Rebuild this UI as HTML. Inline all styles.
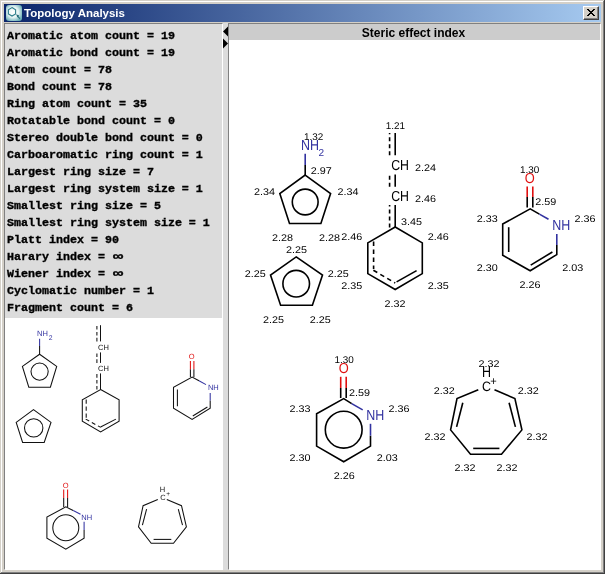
<!DOCTYPE html>
<html><head><meta charset="utf-8">
<style>
html,body{margin:0;padding:0;}
body{width:605px;height:574px;position:relative;overflow:hidden;background:#d4d0c8;font-family:"Liberation Sans",sans-serif;}
.a{position:absolute;}
#title{left:4px;top:4px;width:597px;height:18px;background:linear-gradient(to right,#0a246a,#a6caf0);}
#ttext{left:24px;top:6px;color:#fff;font-weight:bold;font-size:11.5px;line-height:14px;white-space:nowrap;}
#close{left:583px;top:6px;width:16px;height:14px;box-sizing:border-box;background:#d4d0c8;border-top:1px solid #fff;border-left:1px solid #fff;border-right:1px solid #404040;border-bottom:1px solid #404040;}
#close:after{content:"";position:absolute;left:0;top:0;right:0;bottom:0;border-right:1px solid #808080;border-bottom:1px solid #808080;}
#lp{left:4px;top:23px;width:219px;height:547px;box-sizing:border-box;border-top:1px solid #808080;border-left:1px solid #808080;border-right:1px solid #fff;border-bottom:1px solid #fff;background:#fff;}
#txt{left:5px;top:24px;width:217px;height:294px;background:#dcdcdc;}
#lines{left:6.5px;top:28px;font-family:"Liberation Mono",monospace;font-weight:bold;font-size:11.67px;line-height:17px;white-space:pre;color:#000;-webkit-text-stroke:0.35px #000;}
.inf{display:inline-block;transform:scaleX(1.45);transform-origin:0 0;margin-left:1.5px;}
#split{left:223px;top:23px;width:5px;height:547px;background:#dcdcdc;}
#rp{left:228px;top:23px;width:373px;height:547px;box-sizing:border-box;border-top:1px solid #808080;border-left:1px solid #808080;border-right:1px solid #fff;border-bottom:1px solid #fff;background:#fff;}
#hdr{left:229px;top:24px;width:369px;padding-right:2px;padding-top:1px;height:15px;background:#cccccc;text-align:center;font-weight:bold;font-size:12px;line-height:16px;color:#000;}
svg{position:absolute;left:0;top:0;will-change:transform;}
#lines,#ttext,#hdr{will-change:transform;}
</style></head><body>
<!-- outer frame -->
<div class="a" style="left:1px;top:1px;width:602px;height:1px;background:#fff"></div>
<div class="a" style="left:1px;top:1px;width:1px;height:571px;background:#fff"></div>
<div class="a" style="left:0;top:573px;width:605px;height:1px;background:#404040"></div>
<div class="a" style="left:604px;top:0;width:1px;height:574px;background:#404040"></div>
<div class="a" style="left:1px;top:572px;width:603px;height:1px;background:#808080"></div>
<div class="a" style="left:603px;top:1px;width:1px;height:572px;background:#808080"></div>

<div id="title" class="a"></div>
<div id="ttext" class="a">Topology Analysis</div>
<div id="close" class="a"></div>
<svg width="605" height="30" viewBox="0 0 605 30" shape-rendering="crispEdges">
<g fill="#000">
<rect x="587" y="9" width="2" height="1"/><rect x="593" y="9" width="2" height="1"/>
<rect x="588" y="10" width="2" height="1"/><rect x="592" y="10" width="2" height="1"/>
<rect x="589" y="11" width="4" height="1"/>
<rect x="590" y="12" width="2" height="1"/>
<rect x="589" y="13" width="4" height="1"/>
<rect x="588" y="14" width="2" height="1"/><rect x="592" y="14" width="2" height="1"/>
<rect x="587" y="15" width="2" height="1"/><rect x="593" y="15" width="2" height="1"/>
</g></svg>
<svg width="605" height="30" viewBox="0 0 605 30">
<defs><radialGradient id="ig" cx="0.45" cy="0.45" r="0.6"><stop offset="0" stop-color="#ffffff"/><stop offset="0.55" stop-color="#e6f4f4"/><stop offset="1" stop-color="#6fb0b8"/></radialGradient></defs>
<rect x="6" y="5" width="16" height="16" rx="3" fill="url(#ig)"/>
<polygon points="12,7.6 15.6,9.7 15.6,13.9 12,16 8.4,13.9 8.4,9.7" fill="none" stroke="#2f7f8c" stroke-width="1.1"/>
<path d="M16.2,14.3 L19.2,15.5 L17.3,17.4 Z" fill="#1f6a78"/><path d="M17.6,16.2 L19.8,18.6" stroke="#1f6a78" stroke-width="1.1"/>
</svg>

<div id="lp" class="a"></div>
<div id="txt" class="a"></div>
<div id="lines" class="a">Aromatic atom count = 19
Aromatic bond count = 19
Atom count = 78
Bond count = 78
Ring atom count = 35
Rotatable bond count = 0
Stereo double bond count = 0
Carboaromatic ring count = 1
Largest ring size = 7
Largest ring system size = 1
Smallest ring size = 5
Smallest ring system size = 1
Platt index = 90
Harary index = <span class="inf">&#8734;</span>
Wiener index = <span class="inf">&#8734;</span>
Cyclomatic number = 1
Fragment count = 6</div>
<div id="split" class="a"></div>
<div id="rp" class="a"></div>
<div id="hdr" class="a">Steric effect index</div>

<svg width="605" height="574" viewBox="0 0 605 574">
<!-- splitter arrows -->
<polygon points="223,31.5 228,26.5 228,36.5" fill="#000"/>
<polygon points="223,38.5 228,43.5 223,48.5" fill="#000"/>
<g font-family="Liberation Sans, sans-serif" text-rendering="geometricPrecision">
<!--MOL-->
<polygon points="305.2,175.1 330.6,193.6 320.9,223.5 289.5,223.5 279.8,193.6" fill="none" stroke="#000" stroke-width="1.6" stroke-linejoin="miter"/>
<circle cx="305.2" cy="202.0" r="12.9" fill="none" stroke="#000" stroke-width="1.6"/>
<line x1="305.2" y1="175.5" x2="305.2" y2="165.0" stroke="#000" stroke-width="1.6"/>
<line x1="305.2" y1="165.0" x2="305.2" y2="153.7" stroke="#3232a0" stroke-width="1.6"/>
<text x="301.0" y="149.9" font-size="14.5" fill="#3232a0" textLength="18" lengthAdjust="spacingAndGlyphs">NH</text>
<text x="318.6" y="156.1" font-size="10" fill="#3232a0">2</text>
<polygon points="296.2,256.9 322.5,275.1 312.4,305.2 280.6,305.2 270.5,275.1" fill="none" stroke="#000" stroke-width="1.6" stroke-linejoin="miter"/>
<circle cx="296.2" cy="283.7" r="13.3" fill="none" stroke="#000" stroke-width="1.6"/>
<line x1="395.2" y1="133.0" x2="395.2" y2="155.3" stroke="#000" stroke-width="1.6"/>
<line x1="389.6" y1="155.3" x2="389.6" y2="133.0" stroke="#000" stroke-width="1.6" stroke-dasharray="4 3"/>
<line x1="395.2" y1="174.5" x2="395.2" y2="186.7" stroke="#000" stroke-width="1.6"/>
<line x1="389.6" y1="186.7" x2="389.6" y2="174.5" stroke="#000" stroke-width="1.6" stroke-dasharray="4 3"/>
<line x1="395.2" y1="205.0" x2="395.2" y2="227.0" stroke="#000" stroke-width="1.6"/>
<line x1="389.6" y1="227.5" x2="389.6" y2="205.0" stroke="#000" stroke-width="1.6" stroke-dasharray="4 3"/>
<polygon points="395.2,227.0 422.3,242.9 422.3,273.6 395.2,289.5 367.8,273.6 367.8,242.9" fill="none" stroke="#000" stroke-width="1.6" stroke-linejoin="miter"/>
<line x1="373.6" y1="241.6" x2="373.6" y2="269.0" stroke="#000" stroke-width="1.6" stroke-dasharray="4.5 3.5"/>
<line x1="373.4" y1="270.3" x2="395.2" y2="283.0" stroke="#000" stroke-width="1.6" stroke-dasharray="4.5 3.5"/>
<line x1="396.6" y1="281.9" x2="416.6" y2="270.6" stroke="#000" stroke-width="1.6"/>
<text x="391.2" y="170.1" font-size="14.5" fill="#000" textLength="17.8" lengthAdjust="spacingAndGlyphs">CH</text>
<text x="391.2" y="200.6" font-size="14.5" fill="#000" textLength="17.8" lengthAdjust="spacingAndGlyphs">CH</text>
<polyline points="539.4,214.1 530.2,208.9 502.7,224.0 502.7,255.2 530.2,270.8 556.8,254.6 556.8,245.0" fill="none" stroke="#000" stroke-width="1.6" stroke-linejoin="miter"/>
<line x1="539.4" y1="214.1" x2="548.5" y2="219.3" stroke="#3232a0" stroke-width="1.6"/>
<line x1="556.8" y1="234.0" x2="556.8" y2="245.0" stroke="#3232a0" stroke-width="1.6"/>
<line x1="508.7" y1="227.2" x2="508.7" y2="252.0" stroke="#000" stroke-width="1.6"/>
<line x1="530.7" y1="265.1" x2="552.4" y2="252.0" stroke="#000" stroke-width="1.6"/>
<line x1="527.2" y1="207.5" x2="527.2" y2="197.0" stroke="#000" stroke-width="1.6"/>
<line x1="527.2" y1="197.0" x2="527.2" y2="186.6" stroke="#e01010" stroke-width="1.6"/>
<line x1="532.8" y1="207.5" x2="532.8" y2="197.0" stroke="#000" stroke-width="1.6"/>
<line x1="532.8" y1="197.0" x2="532.8" y2="186.6" stroke="#e01010" stroke-width="1.6"/>
<text x="524.8" y="182.7" font-size="14.5" fill="#e01010" textLength="10" lengthAdjust="spacingAndGlyphs">O</text>
<text x="552.3" y="229.9" font-size="14.5" fill="#3232a0" textLength="18" lengthAdjust="spacingAndGlyphs">NH</text>
<polyline points="351.7,403.6 343.7,398.6 316.6,413.7 316.6,446.1 343.7,461.8 370.5,446.1 370.5,435.7" fill="none" stroke="#000" stroke-width="1.6" stroke-linejoin="miter"/>
<line x1="351.7" y1="403.6" x2="362.7" y2="409.9" stroke="#3232a0" stroke-width="1.6"/>
<line x1="370.5" y1="435.7" x2="370.5" y2="423.8" stroke="#3232a0" stroke-width="1.6"/>
<circle cx="343.7" cy="429.7" r="18.4" fill="none" stroke="#000" stroke-width="1.6"/>
<line x1="340.7" y1="398.0" x2="340.7" y2="388.0" stroke="#000" stroke-width="1.6"/>
<line x1="340.7" y1="388.0" x2="340.7" y2="376.8" stroke="#e01010" stroke-width="1.6"/>
<line x1="346.2" y1="398.0" x2="346.2" y2="388.0" stroke="#000" stroke-width="1.6"/>
<line x1="346.2" y1="388.0" x2="346.2" y2="376.8" stroke="#e01010" stroke-width="1.6"/>
<text x="338.8" y="372.5" font-size="14.5" fill="#e01010" textLength="10" lengthAdjust="spacingAndGlyphs">O</text>
<text x="366.2" y="419.8" font-size="14.5" fill="#3232a0" textLength="18" lengthAdjust="spacingAndGlyphs">NH</text>
<polyline points="478.3,389.8 457.0,398.6 450.6,429.9 470.5,454.2 501.5,454.2 521.9,429.9 514.9,398.6 494.5,389.8" fill="none" stroke="#000" stroke-width="1.6" stroke-linejoin="miter"/>
<line x1="462.8" y1="402.8" x2="456.6" y2="426.9" stroke="#000" stroke-width="1.6"/>
<line x1="509.1" y1="402.8" x2="515.4" y2="426.9" stroke="#000" stroke-width="1.6"/>
<line x1="473.2" y1="448.4" x2="499.4" y2="448.4" stroke="#000" stroke-width="1.6"/>
<text x="481.9" y="377.0" font-size="15.5" fill="#000" textLength="9" lengthAdjust="spacingAndGlyphs">H</text>
<text x="482.0" y="391.2" font-size="13.5" fill="#000" textLength="9" lengthAdjust="spacingAndGlyphs">C</text>
<text x="490.2" y="384.8" font-size="11.5" fill="#000" textLength="6.5" lengthAdjust="spacingAndGlyphs">+</text>
<polygon points="39.6,354.2 56.7,366.4 50.4,387.2 28.8,387.2 22.4,366.4" fill="none" stroke="#111" stroke-width="1.05" stroke-linejoin="miter"/>
<circle cx="39.6" cy="371.6" r="8.6" fill="none" stroke="#111" stroke-width="1.05"/>
<line x1="39.6" y1="354.2" x2="39.6" y2="346.0" stroke="#111" stroke-width="1.05"/>
<line x1="39.6" y1="346.0" x2="39.6" y2="338.8" stroke="#3232a0" stroke-width="1.05"/>
<text x="37.0" y="335.6" font-size="7.5" fill="#3232a0">NH</text>
<text x="48.8" y="340.0" font-size="6.8" fill="#3232a0">2</text>
<polygon points="33.5,409.6 51.0,422.4 44.2,442.5 22.6,442.5 16.2,422.4" fill="none" stroke="#111" stroke-width="1.05" stroke-linejoin="miter"/>
<circle cx="33.7" cy="427.9" r="9.2" fill="none" stroke="#111" stroke-width="1.05"/>
<line x1="100.5" y1="325.2" x2="100.5" y2="341.4" stroke="#111" stroke-width="1.05"/>
<line x1="96.9" y1="341.4" x2="96.9" y2="325.2" stroke="#111" stroke-width="1.05" stroke-dasharray="3.6 2.3"/>
<line x1="100.5" y1="352.4" x2="100.5" y2="362.9" stroke="#111" stroke-width="1.05"/>
<line x1="96.9" y1="362.9" x2="96.9" y2="352.4" stroke="#111" stroke-width="1.05" stroke-dasharray="3.6 2.3"/>
<line x1="100.5" y1="373.4" x2="100.5" y2="389.5" stroke="#111" stroke-width="1.05"/>
<line x1="96.9" y1="389.5" x2="96.9" y2="373.4" stroke="#111" stroke-width="1.05" stroke-dasharray="3.6 2.3"/>
<polygon points="100.6,389.5 119.1,399.9 119.1,421.2 100.6,432.0 82.3,421.2 82.3,399.9" fill="none" stroke="#111" stroke-width="1.05" stroke-linejoin="miter"/>
<line x1="86.2" y1="399.5" x2="86.2" y2="418.2" stroke="#111" stroke-width="1.05" stroke-dasharray="4.2 2.8"/>
<line x1="85.7" y1="419.1" x2="100.7" y2="427.4" stroke="#111" stroke-width="1.05" stroke-dasharray="4 3"/>
<line x1="100.6" y1="427.0" x2="115.9" y2="419.1" stroke="#111" stroke-width="1.05"/>
<text x="98.0" y="349.8" font-size="7.5" fill="#111">CH</text>
<text x="98.0" y="370.7" font-size="7.5" fill="#111">CH</text>
<polyline points="199.0,380.8 192.1,377.0 173.5,387.4 173.5,408.3 192.1,419.5 210.2,408.3 210.2,400.6" fill="none" stroke="#111" stroke-width="1.05" stroke-linejoin="miter"/>
<line x1="199.0" y1="380.8" x2="206.0" y2="384.6" stroke="#3232a0" stroke-width="1.05"/>
<line x1="210.2" y1="400.6" x2="210.2" y2="393.0" stroke="#3232a0" stroke-width="1.05"/>
<line x1="177.4" y1="389.5" x2="177.4" y2="406.2" stroke="#111" stroke-width="1.05"/>
<line x1="192.8" y1="416.0" x2="207.4" y2="407.0" stroke="#111" stroke-width="1.05"/>
<line x1="190.4" y1="377.0" x2="190.4" y2="369.3" stroke="#111" stroke-width="1.05"/>
<line x1="190.4" y1="369.3" x2="190.4" y2="360.9" stroke="#e01010" stroke-width="1.05"/>
<line x1="193.9" y1="377.0" x2="193.9" y2="369.3" stroke="#111" stroke-width="1.05"/>
<line x1="193.9" y1="369.3" x2="193.9" y2="360.9" stroke="#e01010" stroke-width="1.05"/>
<text x="188.8" y="358.8" font-size="7.5" fill="#e01010">O</text>
<text x="207.9" y="390.0" font-size="7.5" fill="#3232a0">NH</text>
<polyline points="73.2,510.5 65.8,506.9 46.9,517.1 46.9,538.2 65.8,549.2 84.1,538.2 84.1,530.0" fill="none" stroke="#111" stroke-width="1.05" stroke-linejoin="miter"/>
<line x1="73.2" y1="510.5" x2="80.5" y2="514.2" stroke="#3232a0" stroke-width="1.05"/>
<line x1="84.1" y1="530.0" x2="84.1" y2="521.8" stroke="#3232a0" stroke-width="1.05"/>
<circle cx="65.8" cy="527.7" r="13.0" fill="none" stroke="#111" stroke-width="1.05"/>
<line x1="63.7" y1="506.9" x2="63.7" y2="498.0" stroke="#111" stroke-width="1.05"/>
<line x1="63.7" y1="498.0" x2="63.7" y2="489.6" stroke="#e01010" stroke-width="1.05"/>
<line x1="67.6" y1="506.9" x2="67.6" y2="498.0" stroke="#111" stroke-width="1.05"/>
<line x1="67.6" y1="498.0" x2="67.6" y2="489.6" stroke="#e01010" stroke-width="1.05"/>
<text x="62.7" y="488.0" font-size="7.5" fill="#e01010">O</text>
<text x="81.3" y="519.9" font-size="7.5" fill="#3232a0">NH</text>
<polyline points="157.8,499.4 143.1,505.7 138.5,526.9 151.2,543.3 173.5,543.3 186.4,526.9 181.5,505.7 166.8,499.4" fill="none" stroke="#111" stroke-width="1.05" stroke-linejoin="miter"/>
<line x1="146.6" y1="509.2" x2="142.4" y2="525.2" stroke="#111" stroke-width="1.05"/>
<line x1="178.3" y1="509.2" x2="182.5" y2="525.2" stroke="#111" stroke-width="1.05"/>
<line x1="153.6" y1="539.4" x2="171.3" y2="539.4" stroke="#111" stroke-width="1.05"/>
<text x="159.8" y="491.8" font-size="7.5" fill="#111">H</text>
<text x="160.2" y="500.1" font-size="7.5" fill="#111">C</text>
<text x="166.3" y="496.3" font-size="6.5" fill="#111">+</text>
<text x="304.0" y="140.0" font-size="9.8" fill="#000" textLength="19.3" lengthAdjust="spacingAndGlyphs">1.32</text>
<text x="310.7" y="174.0" font-size="9.8" fill="#000" textLength="21.0" lengthAdjust="spacingAndGlyphs">2.97</text>
<text x="254.0" y="195.2" font-size="9.8" fill="#000" textLength="21.0" lengthAdjust="spacingAndGlyphs">2.34</text>
<text x="337.4" y="195.2" font-size="9.8" fill="#000" textLength="21.0" lengthAdjust="spacingAndGlyphs">2.34</text>
<text x="271.9" y="241.0" font-size="9.8" fill="#000" textLength="21.0" lengthAdjust="spacingAndGlyphs">2.28</text>
<text x="319.0" y="241.0" font-size="9.8" fill="#000" textLength="21.0" lengthAdjust="spacingAndGlyphs">2.28</text>
<text x="285.9" y="253.0" font-size="9.8" fill="#000" textLength="21.0" lengthAdjust="spacingAndGlyphs">2.25</text>
<text x="244.7" y="277.3" font-size="9.8" fill="#000" textLength="21.0" lengthAdjust="spacingAndGlyphs">2.25</text>
<text x="327.8" y="277.3" font-size="9.8" fill="#000" textLength="21.0" lengthAdjust="spacingAndGlyphs">2.25</text>
<text x="262.9" y="322.8" font-size="9.8" fill="#000" textLength="21.0" lengthAdjust="spacingAndGlyphs">2.25</text>
<text x="309.8" y="322.8" font-size="9.8" fill="#000" textLength="21.0" lengthAdjust="spacingAndGlyphs">2.25</text>
<text x="385.8" y="128.8" font-size="9.8" fill="#000" textLength="19.3" lengthAdjust="spacingAndGlyphs">1.21</text>
<text x="414.9" y="171.0" font-size="9.8" fill="#000" textLength="21.0" lengthAdjust="spacingAndGlyphs">2.24</text>
<text x="414.9" y="201.8" font-size="9.8" fill="#000" textLength="21.0" lengthAdjust="spacingAndGlyphs">2.46</text>
<text x="401.0" y="224.9" font-size="9.8" fill="#000" textLength="21.0" lengthAdjust="spacingAndGlyphs">3.45</text>
<text x="341.3" y="239.7" font-size="9.8" fill="#000" textLength="21.0" lengthAdjust="spacingAndGlyphs">2.46</text>
<text x="427.7" y="239.7" font-size="9.8" fill="#000" textLength="21.0" lengthAdjust="spacingAndGlyphs">2.46</text>
<text x="341.3" y="288.7" font-size="9.8" fill="#000" textLength="21.0" lengthAdjust="spacingAndGlyphs">2.35</text>
<text x="427.7" y="288.7" font-size="9.8" fill="#000" textLength="21.0" lengthAdjust="spacingAndGlyphs">2.35</text>
<text x="384.4" y="306.5" font-size="9.8" fill="#000" textLength="21.0" lengthAdjust="spacingAndGlyphs">2.32</text>
<text x="519.9" y="172.7" font-size="9.8" fill="#000" textLength="19.3" lengthAdjust="spacingAndGlyphs">1.30</text>
<text x="535.3" y="205.4" font-size="9.8" fill="#000" textLength="21.0" lengthAdjust="spacingAndGlyphs">2.59</text>
<text x="574.6" y="221.9" font-size="9.8" fill="#000" textLength="21.0" lengthAdjust="spacingAndGlyphs">2.36</text>
<text x="476.7" y="221.9" font-size="9.8" fill="#000" textLength="21.0" lengthAdjust="spacingAndGlyphs">2.33</text>
<text x="476.7" y="270.8" font-size="9.8" fill="#000" textLength="21.0" lengthAdjust="spacingAndGlyphs">2.30</text>
<text x="562.3" y="270.8" font-size="9.8" fill="#000" textLength="21.0" lengthAdjust="spacingAndGlyphs">2.03</text>
<text x="519.6" y="287.8" font-size="9.8" fill="#000" textLength="21.0" lengthAdjust="spacingAndGlyphs">2.26</text>
<text x="334.5" y="363.2" font-size="9.8" fill="#000" textLength="19.3" lengthAdjust="spacingAndGlyphs">1.30</text>
<text x="348.9" y="395.6" font-size="9.8" fill="#000" textLength="21.0" lengthAdjust="spacingAndGlyphs">2.59</text>
<text x="388.6" y="411.7" font-size="9.8" fill="#000" textLength="21.0" lengthAdjust="spacingAndGlyphs">2.36</text>
<text x="289.5" y="411.7" font-size="9.8" fill="#000" textLength="21.0" lengthAdjust="spacingAndGlyphs">2.33</text>
<text x="289.5" y="461.2" font-size="9.8" fill="#000" textLength="21.0" lengthAdjust="spacingAndGlyphs">2.30</text>
<text x="376.7" y="461.2" font-size="9.8" fill="#000" textLength="21.0" lengthAdjust="spacingAndGlyphs">2.03</text>
<text x="333.7" y="479.0" font-size="9.8" fill="#000" textLength="21.0" lengthAdjust="spacingAndGlyphs">2.26</text>
<text x="478.4" y="366.6" font-size="9.8" fill="#000" textLength="21.0" lengthAdjust="spacingAndGlyphs">2.32</text>
<text x="433.8" y="393.9" font-size="9.8" fill="#000" textLength="21.0" lengthAdjust="spacingAndGlyphs">2.32</text>
<text x="517.8" y="393.9" font-size="9.8" fill="#000" textLength="21.0" lengthAdjust="spacingAndGlyphs">2.32</text>
<text x="424.5" y="440.2" font-size="9.8" fill="#000" textLength="21.0" lengthAdjust="spacingAndGlyphs">2.32</text>
<text x="526.4" y="440.2" font-size="9.8" fill="#000" textLength="21.0" lengthAdjust="spacingAndGlyphs">2.32</text>
<text x="454.6" y="470.7" font-size="9.8" fill="#000" textLength="21.0" lengthAdjust="spacingAndGlyphs">2.32</text>
<text x="496.4" y="470.7" font-size="9.8" fill="#000" textLength="21.0" lengthAdjust="spacingAndGlyphs">2.32</text>
<!--/MOL-->
</g>
</svg>
</body></html>
